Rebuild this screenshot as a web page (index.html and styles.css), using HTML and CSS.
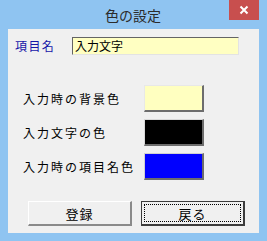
FILE: index.html
```html
<!DOCTYPE html>
<html lang="ja">
<head>
<meta charset="utf-8">
<link rel="stylesheet" href="styles.css">
</head>
<body>
<div class="window">
  <div class="titlebar">
    <div class="title">色の設定</div>
    <div class="close">
      <svg width="10" height="10" viewBox="0 0 10 10"><path d="M1.5 1.5 L8.5 8.5 M8.5 1.5 L1.5 8.5" stroke="#fff" stroke-width="2"/></svg>
    </div>
  </div>
  <div class="client">
    <div class="name-row">
      <span class="name-label">項目名</span>
      <div class="name-input">入力文字</div>
    </div>
    <div class="colors">
      <div class="color-row">
        <span class="color-label">入力時の背景色</span>
        <div class="swatch swatch-yellow"></div>
      </div>
      <div class="color-row">
        <span class="color-label">入力文字の色</span>
        <div class="swatch swatch-black"></div>
      </div>
      <div class="color-row">
        <span class="color-label">入力時の項目名色</span>
        <div class="swatch swatch-blue"></div>
      </div>
    </div>
    <div class="buttons">
      <div class="btn">登録</div>
      <div class="btn btn-default"><span class="focus">戻る</span></div>
    </div>
  </div>
</div>
</body>
</html>
```
FILE: styles.css
```css
html, body {
  margin: 0;
  padding: 0;
}
body {
  width: 267px;
  height: 241px;
  overflow: hidden;
  font-family: "Noto Sans CJK JP", "Noto Sans", sans-serif;
}
.window {
  width: 267px;
  height: 241px;
  background: #8fc4f1;
  display: flex;
  flex-direction: column;
}
.titlebar {
  height: 29px;
  display: flex;
  align-items: flex-start;
}
.title {
  flex: 1;
  padding-left: 37px;
  text-align: center;
  font-size: 14px;
  line-height: 30px;
  color: #2b2b2b;
  letter-spacing: 0;
}
.close {
  width: 30px;
  height: 20px;
  margin-right: 8px;
  background: #c84f4e;
  display: flex;
  align-items: center;
  justify-content: center;
}
.client {
  margin: 0 8px 0 8px;
  height: 204px;
  background: #f0f0f0;
  box-sizing: border-box;
  padding: 8px 0 0 0;
  display: flex;
  flex-direction: column;
}
.name-row {
  display: flex;
  align-items: center;
  height: 18px;
}
.name-label {
  width: 57px;
  padding-left: 7px;
  font-size: 12px;
  letter-spacing: 1.4px;
  color: #1616a8;
  line-height: 18px;
}
.name-input {
  width: 167px;
  height: 18px;
  box-sizing: border-box;
  background: #ffffc2;
  border-top: 1px solid #646464;
  border-left: 1px solid #646464;
  border-right: 1px solid #e3e3e3;
  border-bottom: 1px solid #e3e3e3;
  font-size: 12px;
  line-height: 16px;
  padding-left: 2px;
  color: #000;
}
.colors {
  margin-top: 30px;
  display: flex;
  flex-direction: column;
  gap: 7px;
}
.color-row {
  display: flex;
  align-items: center;
  height: 27px;
}
.color-label {
  width: 121px;
  padding-left: 15px;
  font-size: 12px;
  letter-spacing: 2px;
  color: #000;
}
.swatch {
  width: 60px;
  height: 27px;
  box-sizing: border-box;
  border-top: 1px solid #ffffff;
  border-left: 1px solid #ffffff;
  border-right: 2px solid #6d6d6d;
  border-bottom: 2px solid #6d6d6d;
}
.swatch-yellow { background: #ffffc0; border-top-color: #e8e8e8; border-left-color: #e8e8e8; }
.swatch-black { background: #000000; border-top-color: #d8d8d8; border-left-color: #d8d8d8; }
.swatch-blue { background: #0000ff; border-top-color: #d0d0d0; border-left-color: #d0d0d0; }
.buttons {
  margin-top: 21px;
  display: flex;
  gap: 9px;
  padding-left: 20px;
}
.btn {
  width: 104px;
  height: 25px;
  box-sizing: border-box;
  background: #f0f0f0;
  border-top: 1px solid #ffffff;
  border-left: 1px solid #ffffff;
  border-right: 2px solid #8a8a8a;
  border-bottom: 2px solid #8a8a8a;
  display: flex;
  align-items: center;
  justify-content: center;
  font-size: 13px;
  letter-spacing: 1px;
  color: #000;
}
.btn-default {
  border: 1px solid #3c3c3c;
  border-right-width: 2px;
  border-bottom-width: 2px;
  padding: 2px;
}
.focus {
  flex: 1;
  align-self: stretch;
  border: 1px dotted #000;
  display: flex;
  align-items: center;
  justify-content: center;
}
```
